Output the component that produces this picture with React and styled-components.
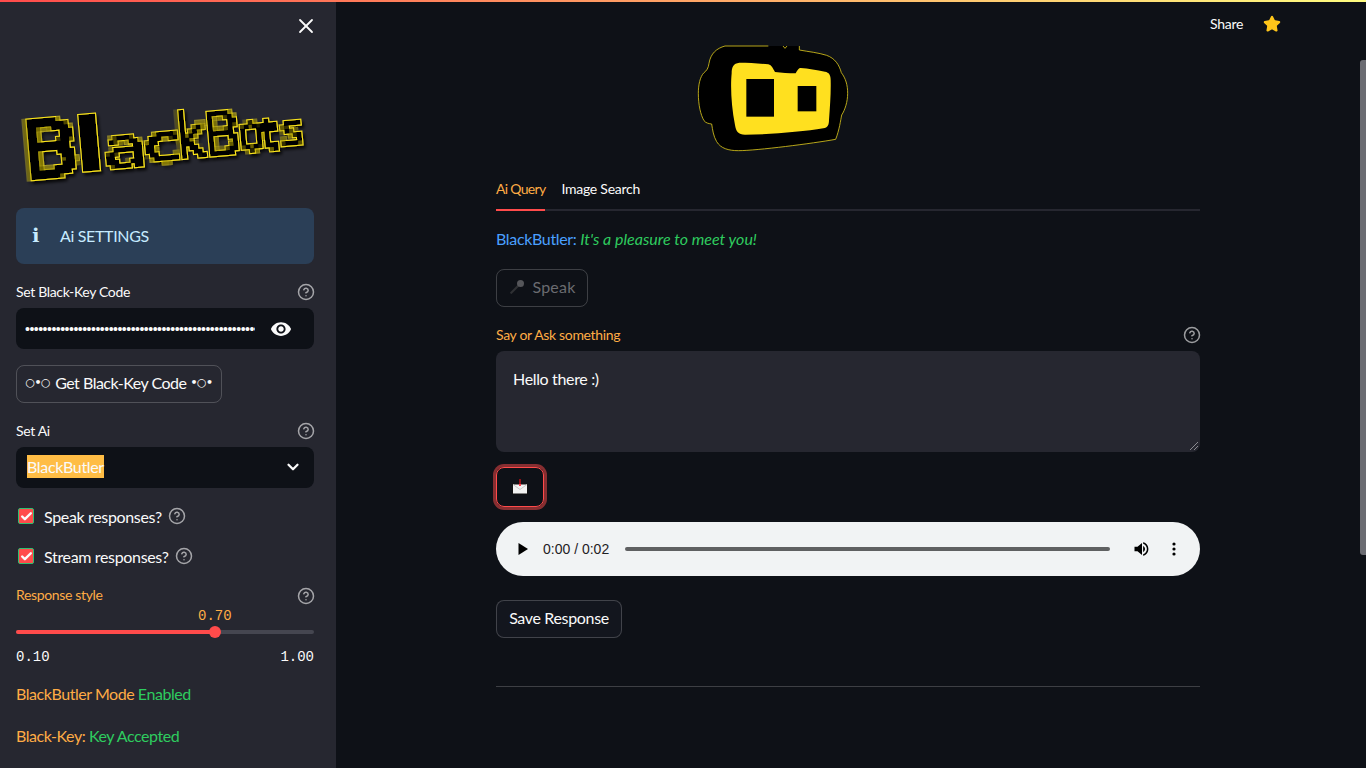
import React from "react";
import styled, { createGlobalStyle } from "styled-components";
import { CircleHelp, X, Star, ChevronDown, Check } from "lucide-react";

const GlobalStyle = createGlobalStyle`
  html, body {
    margin: 0;
    padding: 0;
    height: 100%;
    overflow: hidden;
    background: #0e1117;
  }
  body {
    font-family: "Lato", "Noto Sans", "DejaVu Sans", sans-serif;
    letter-spacing: -0.34px;
    color: #fafafa;
  }
  * { box-sizing: border-box; }
`;

const Page = styled.div`
  display: flex;
  width: 1366px;
  height: 768px;
  overflow: hidden;
  position: relative;
`;

const Decoration = styled.div`
  position: absolute;
  top: 0;
  left: 0;
  right: 0;
  height: 2px;
  background-image: linear-gradient(90deg, #ff4b4b, #fffd80);
  z-index: 5;
`;

const Sidebar = styled.aside`
  width: 336px;
  flex: none;
  background: #262730;
  padding: 0 22px 0 16px;
  display: flex;
  flex-direction: column;
  position: relative;
`;

const CloseButton = styled.div`
  position: absolute;
  top: 14px;
  left: 294px;
  display: flex;
  color: #fafafa;
`;

const LogoWrap = styled.div`
  height: 208px;
  padding-top: 96px;
  margin-left: -6px;
`;

const InfoBox = styled.div`
  height: 56px;
  border-radius: 8px;
  background: #2b3f57;
  color: #c7ebff;
  display: flex;
  align-items: center;
  padding: 0 0 2px 16px;
  font-size: 16px;
`;

const InfoGlyph = styled.span`
  width: 28px;
  font-family: "DejaVu Sans", sans-serif;
  font-weight: 700;
  font-size: 19px;
`;

const LabelRow = styled.div`
  display: flex;
  justify-content: space-between;
  align-items: center;
  height: 20px;
  margin-top: ${props => props.top || 0}px;
  font-size: 14px;
  color: ${props => props.color || "#fafafa"};
`;

const LabelText = styled.span`
  margin-bottom: ${props => props.lift || 2}px;
`;

const Help = styled(CircleHelp)`
  color: rgba(250, 250, 250, 0.6);
  flex: none;
  margin-right: -1px;
`;

const Field = styled.div`
  height: 41px;
  margin-top: 6px;
  background: #0e1117;
  border-radius: 8px;
  display: flex;
  align-items: center;
  position: relative;
`;

const PasswordInput = styled.input`
  width: 230px;
  margin-left: 9px;
  background: transparent;
  border: none;
  outline: none;
  padding: 0;
  color: #fafafa;
  font-family: "Liberation Sans", sans-serif;
  font-size: 14px;
  letter-spacing: -0.5px;
`;

const EyeButton = styled.svg`
  position: absolute;
  left: 254px;
  top: 10px;
`;

const SelectedText = styled.span`
  margin: 0 0 2px 11px;
  background: #ffbd45;
  color: #fafafa;
  font-size: 16px;
  line-height: 23px;
`;

const SelectArrow = styled(ChevronDown)`
  position: absolute;
  right: 12px;
  top: 11px;
  color: #fafafa;
`;

const Button = styled.div`
  display: inline-flex;
  align-items: center;
  justify-content: center;
  align-self: flex-start;
  height: 38px;
  width: ${props => props.width}px;
  margin-top: ${props => props.top || 0}px;
  padding-bottom: 3px;
  border-radius: 8px;
  border: 1px solid rgba(250, 250, 250, 0.2);
  background: ${props => props.bg || "transparent"};
  color: ${props => props.color || "#fafafa"};
  font-size: 16px;
  letter-spacing: ${props => props.spacing || -0.34}px;
  white-space: nowrap;
  gap: ${props => props.gap || 0}px;
`;

const Rings = styled.span`
  font-family: "DejaVu Sans", sans-serif;
  font-size: 11px;
  font-weight: 700;
  letter-spacing: -0.5px;
  margin: ${props => (props.right ? "0 0 0 4px" : "0 5px 0 0")};
`;

const CheckRow = styled.div`
  display: flex;
  align-items: center;
  height: 24px;
  margin-top: ${props => props.top || 0}px;
  font-size: 16px;
`;

const CheckBox = styled.span`
  width: 16px;
  height: 16px;
  margin: 0 10px 0 2px;
  border-radius: 2px;
  border: 1px solid #2fbf71;
  background: #ff4b4b;
  display: flex;
  align-items: center;
  justify-content: center;
  color: #fafafa;
`;

const CheckHelp = styled(Help)`
  margin-left: 6px;
`;

const SliderBox = styled.div`
  position: relative;
  height: 64px;
  margin-top: -1px;
  font-family: "Liberation Mono", monospace;
  font-size: 14px;
  letter-spacing: 0;
`;

const SliderValue = styled.span`
  position: absolute;
  left: 182px;
  top: 3px;
  color: #ffac45;
`;

const Track = styled.div`
  position: absolute;
  top: 25px;
  left: 0;
  right: 0;
  height: 4px;
  border-radius: 2px;
  background: #454650;
`;

const TrackFill = styled.div`
  height: 100%;
  border-radius: 2px;
  background: #ff4b4b;
`;

const Thumb = styled.div`
  position: absolute;
  top: 21px;
  left: 193px;
  width: 12px;
  height: 12px;
  border-radius: 50%;
  background: #ff4b4b;
`;

const SliderEnds = styled.div`
  position: absolute;
  left: 0;
  right: 0;
  top: 44px;
  display: flex;
  justify-content: space-between;
`;

const StatusLine = styled.div`
  font-size: 16px;
  line-height: 24px;
  letter-spacing: -0.45px;
  margin-top: ${props => props.top || 0}px;
  color: #ffac45;
`;

const Green = styled.span`
  color: #2ecc5f;
`;

const Main = styled.main`
  flex: 1;
  position: relative;
  padding: 30px 166px 0 160px;
  display: flex;
  flex-direction: column;
`;

const TopActions = styled.div`
  position: absolute;
  top: 13px;
  left: 874px;
  display: flex;
  align-items: center;
  gap: 20px;
  font-size: 14px;
  letter-spacing: -0.25px;
  height: 20px;
`;

const TopStar = styled(Star)`
  margin-top: 2px;
`;

const ScrollThumb = styled.div`
  position: absolute;
  top: 60px;
  right: 0;
  width: 6px;
  height: 495px;
  border-radius: 3px 0 0 3px;
  background: #6b6c72;
`;

const BotLogo = styled.svg`
  display: block;
  margin-left: 184px;
  flex: none;
`;

const Tabs = styled.div`
  display: flex;
  gap: 16px;
  margin-top: 18px;
  height: 33px;
  border-bottom: 2px solid #262730;
  font-size: 14px;
`;

const Tab = styled.div`
  height: 33px;
  padding-top: 2px;
  letter-spacing: ${props => (props.active ? -0.7 : -0.25)}px;
  color: ${props => (props.active ? "#ffac45" : "#fafafa")};
  border-bottom: 2px solid ${props => (props.active ? "#ff4b4b" : "transparent")};
`;

const Reply = styled.div`
  margin-top: 16px;
  font-size: 16px;
  line-height: 24px;
  color: #4aa0ff;
`;

const ReplyText = styled.em`
  color: #2ecc5f;
  letter-spacing: 0;
`;

const MicText = styled.span`
  color: #6a6b70;
  letter-spacing: 0.2px;
`;

const TextArea = styled.div`
  height: 101px;
  margin-top: 6px;
  background: #262730;
  border-radius: 8px;
  padding: 16px 17px;
  font-size: 16px;
  line-height: 24px;
  position: relative;
`;

const Grip = styled.svg`
  position: absolute;
  right: 1px;
  bottom: 1px;
`;

const SendButton = styled.div`
  width: 48px;
  height: 40px;
  margin-top: 15px;
  border-radius: 8px;
  border: 1px solid #ff4b4b;
  box-shadow: 0 0 0 3px rgba(255, 75, 75, 0.5);
  display: flex;
  align-items: center;
  justify-content: center;
`;

const AudioBar = styled.div`
  height: 54px;
  margin-top: 15px;
  border-radius: 27px;
  background: #f1f3f4;
  display: flex;
  align-items: center;
  padding: 0 18px 0 21px;
  color: #1f2124;
  font-family: "Liberation Sans", sans-serif;
  font-size: 14px;
  letter-spacing: 0;
`;

const AudioTime = styled.span`
  margin-left: 14px;
  white-space: nowrap;
`;

const AudioTrack = styled.div`
  flex: 1;
  height: 4px;
  margin: 0 23px 0 16px;
  border-radius: 2px;
  background: #5f6061;
`;

const AudioMenu = styled.svg`
  margin-left: 15px;
`;

const Divider = styled.div`
  height: 1px;
  margin-top: 48px;
  background: rgba(250, 250, 250, 0.2);
`;

const logoLetters = [
  { c: "B", x: 12, y: 70, s: 74, sx: 1.16, w: 3 },
  { c: "l", x: 65, y: 66, s: 70, sx: 1.6, w: 3 },
  { c: "a", x: 93, y: 67, s: 54, sx: 1.4, w: 1 },
  { c: "c", x: 135, y: 65, s: 50, sx: 1.3, w: 2 },
  { c: "k", x: 167, y: 64, s: 58, sx: 0.9, w: 2 },
  { c: "B", x: 195, y: 64, s: 58, sx: 0.95, w: 1 },
  { c: "o", x: 229, y: 62, s: 50, sx: 0.9, w: 1 },
  { c: "t", x: 253, y: 62, s: 42, sx: 0.9, w: 2 },
  { c: "s", x: 272, y: 60, s: 42, sx: 1.05, w: 1 },
];

// real text, squared up by a pixelate filter
const BlackBotsLogo = () => (
  <svg width="300" height="100" viewBox="0 0 300 100">
    <defs>
      <filter id="pixelEdge" filterUnits="userSpaceOnUse" x="0" y="0" width="300" height="100">
        <feFlood x="2" y="2" width="1" height="1" />
        <feComposite width="4" height="4" />
        <feTile result="grid" />
        <feComposite in="SourceGraphic" in2="grid" operator="in" />
        <feMorphology operator="dilate" radius="2" result="pix" />
        <feMorphology in="pix" operator="dilate" radius="1" result="fat" />
        <feFlood floodColor="#ffe81f" />
        <feComposite in2="fat" operator="in" result="rim" />
        <feOffset in="fat" dx="2" dy="3" result="off" />
        <feGaussianBlur in="off" stdDeviation="1.500" result="shadow" />
        <feFlood floodColor="#000" floodOpacity="0.8" />
        <feComposite in2="shadow" operator="in" result="dark" />
        <feMerge>
          <feMergeNode in="dark" />
          <feMergeNode in="rim" />
          <feMergeNode in="pix" />
        </feMerge>
      </filter>
    </defs>
    <g transform="rotate(-5 150 60)">
      <g filter="url(#pixelEdge)">
        {logoLetters.map((l, i) => (
          <text
            key={i}
            transform={`translate(${l.x} ${l.y}) scale(${l.sx} 1)`}
            fontFamily="DejaVu Sans, sans-serif"
            fontSize={l.s}
            fill="#000"
            stroke="#000"
            strokeWidth={l.w}
          >
            {l.c}
          </text>
        ))}
      </g>
    </g>
  </svg>
);

const Mic = () => (
  <svg width="16" height="16" viewBox="0 0 16 16">
    <path d="M1.500 14.500l-.5-1L8.500 6l1.500 1.500-7.500 7.500z" fill="#2f3034" />
    <circle cx="11.500" cy="4.500" r="3.500" fill="#55565a" />
  </svg>
);

const Envelope = () => (
  <svg width="18" height="18" viewBox="0 0 18 18">
    <rect x="1.500" y="6" width="15" height="10" fill="#f2f2f2" stroke="#111" />
    <path d="M2 6.500l7 5 7-5" fill="none" stroke="#c9c9c9" />
    <path d="M9 1v7" stroke="#8c0f16" strokeWidth="2" />
    <path d="M9 6v2" stroke="#ff3b4a" strokeWidth="2" />
  </svg>
);

const App = () => (
  <Page>
    <GlobalStyle />
    <Decoration />
    <Sidebar>
      <CloseButton>
        <X size={24} strokeWidth={1.8} />
      </CloseButton>
      <LogoWrap>
        <BlackBotsLogo />
      </LogoWrap>
      <InfoBox>
        <InfoGlyph>ℹ</InfoGlyph>
        Ai SETTINGS
      </InfoBox>
      <LabelRow top={18}>
        <LabelText>Set Black-Key Code</LabelText>
        <Help size={18} />
      </LabelRow>
      <Field>
        <PasswordInput type="password" readOnly value={"x".repeat(60)} />
        <EyeButton width="22" height="22" viewBox="0 0 24 24" fill="#fafafa">
          <path d="M12 4.500C7 4.500 2.730 7.610 1 12c1.730 4.390 6 7.500 11 7.500s9.270-3.110 11-7.500c-1.730-4.390-6-7.500-11-7.500zM12 17c-2.760 0-5-2.240-5-5s2.240-5 5-5 5 2.240 5 5-2.240 5-5 5zm0-8c-1.660 0-3 1.340-3 3s1.340 3 3 3 3-1.340 3-3-1.340-3-3-3z" />
        </EyeButton>
      </Field>
      <Button width={206} top={16} spacing={-0.5}>
        <Rings>○•○</Rings>Get Black-Key Code<Rings right>•○•</Rings>
      </Button>
      <LabelRow top={18}>
        <LabelText>Set Ai</LabelText>
        <Help size={18} />
      </LabelRow>
      <Field>
        <SelectedText>BlackButler</SelectedText>
        <SelectArrow size={18} strokeWidth={3} />
      </Field>
      <CheckRow top={16}>
        <CheckBox><Check size={13} strokeWidth={4.5} /></CheckBox>
        Speak responses?
        <CheckHelp size={18} />
      </CheckRow>
      <CheckRow top={16}>
        <CheckBox><Check size={13} strokeWidth={4.5} /></CheckBox>
        Stream responses?
        <CheckHelp size={18} />
      </CheckRow>
      <LabelRow top={18} color="#ffac45">
        <LabelText lift={4}>Response style</LabelText>
        <Help size={18} />
      </LabelRow>
      <SliderBox>
        <SliderValue>0.70</SliderValue>
        <Track>
          <TrackFill style={{ width: `${(0.7 - 0.1) / 0.9 * 100}%` }} />
        </Track>
        <Thumb />
        <SliderEnds>
          <span>0.10</span>
          <span>1.00</span>
        </SliderEnds>
      </SliderBox>
      <StatusLine top={13}>
        BlackButler Mode <Green>Enabled</Green>
      </StatusLine>
      <StatusLine top={18}>
        Black-Key: <Green>Key Accepted</Green>
      </StatusLine>
    </Sidebar>
    <Main>
      <TopActions>
        Share
        <TopStar size={18} fill="#ffc61a" color="#ffc61a" />
      </TopActions>
      <BotLogo width="190" height="130" viewBox="0 0 570 390">
        <path
          d="M135 48C110 55 92 70 87 100C85 115 80 122 72 128C60 140 55 165 55 190C55 225 62 255 72 272C78 280 88 281 95 282C98 300 100 318 110 335C122 355 145 362 175 362C230 362 400 340 467 328C478 300 482 270 485 255C495 240 503 215 503 190C503 165 497 145 484 128C478 105 465 85 440 76C415 68 385 65 358 60L358 48Z"
          fill="#000"
        />
        <path
          d="M358 48L358 60C385 65 415 68 440 76C465 85 478 105 484 128C497 145 503 165 503 190C503 215 495 240 485 255C482 270 478 300 467 328C400 340 230 362 175 362C145 362 122 355 110 335C100 318 98 300 95 282C88 281 78 280 72 272C62 255 55 225 55 190C55 165 60 140 72 128C80 122 85 115 87 100C92 70 110 55 135 48L265 48"
          fill="none"
          stroke="#d8c41c"
          strokeWidth="2.500"
        />
        <path d="M309 48L315 55L321 48" fill="none" stroke="#d8c41c" strokeWidth="2.500" />
        <path
          d="M178 98C160 100 155 112 155 130C151 170 154 230 165 285C168 305 175 314 195 314C270 314 370 305 430 295C443 293 447 285 447 270C450 230 453 190 452 150C452 135 447 127 435 125C410 120 385 116 362 114C355 114 352 122 347 130C325 130 305 128 285 126C280 118 275 105 265 103C235 100 205 98 178 98Z"
          fill="#ffe01f"
        />
        <rect x="199" y="147" width="83" height="113" fill="#000" />
        <rect x="353" y="168" width="56" height="76" fill="#000" />
      </BotLogo>
      <Tabs>
        <Tab active>Ai Query</Tab>
        <Tab>Image Search</Tab>
      </Tabs>
      <Reply>
        BlackButler: <ReplyText>It's a pleasure to meet you!</ReplyText>
      </Reply>
      <Button width={92} top={18} gap={8} color="#6a6b70">
        <Mic />
        <MicText>Speak</MicText>
      </Button>
      <LabelRow top={18} color="#ffac45">
        <LabelText>Say or Ask something</LabelText>
        <Help size={18} />
      </LabelRow>
      <TextArea>
        Hello there :)
        <Grip width="10" height="10" viewBox="0 0 10 10">
          <path d="M1 9L9 1M5 9L9 5" stroke="#8a8a8f" strokeWidth="1" />
        </Grip>
      </TextArea>
      <SendButton>
        <Envelope />
      </SendButton>
      <AudioBar>
        <svg width="12" height="14" viewBox="0 0 12 14"><path d="M1.500 1v12L11 7z" fill="#000" /></svg>
        <AudioTime>0:00 / 0:02</AudioTime>
        <AudioTrack />
        <svg width="18" height="18" viewBox="0 0 24 24" fill="#000">
          <path d="M2 9v6h4l6 5V4L6 9H2zm14 3c0-1.800-1-3.300-2.500-4v8c1.500-.7 2.500-2.200 2.500-4zM13.500 3v2.100c2.900.9 5 3.600 5 6.900s-2.100 6-5 6.900V21c4-.9 7-4.500 7-9s-3-8.100-7-9z" />
        </svg>
        <AudioMenu width="16" height="16" viewBox="0 0 16 16" fill="#000">
          <circle cx="8" cy="3" r="1.600" />
          <circle cx="8" cy="8" r="1.600" />
          <circle cx="8" cy="13" r="1.600" />
        </AudioMenu>
      </AudioBar>
      <Button width={126} top={24} bg="#13161e">Save Response</Button>
      <Divider />
      <ScrollThumb />
    </Main>
  </Page>
);

export default App;
